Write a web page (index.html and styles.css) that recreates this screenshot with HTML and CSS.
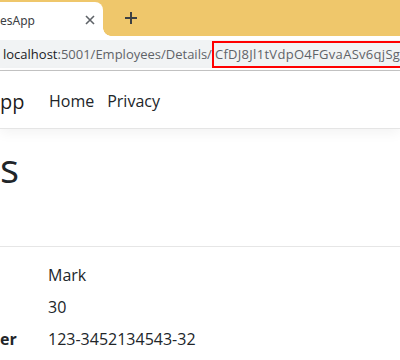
FILE: index.html
```html
<!DOCTYPE html>
<html lang="en">
<head>
    <meta charset="UTF-8">
    <title>EmployeesApp - Details</title>
    <link rel="stylesheet" href="styles.css">
</head>
<body>
    <!-- browser chrome -->
    <div class="tabstrip">
        <div class="tab">
            <span class="tab-title">esApp</span>
            <svg class="tab-close" width="10" height="10" viewBox="0 0 10 10">
                <path d="M1 1 L9 9 M9 1 L1 9" stroke="#5f6368" stroke-width="1.6" fill="none"/>
            </svg>
        </div>
        <div class="newtab">
            <svg width="12" height="12" viewBox="0 0 12 12">
                <path d="M6 0 V12 M0 6 H12" stroke="#3c4043" stroke-width="2" fill="none"/>
            </svg>
        </div>
    </div>

    <div class="toolbar">
        <div class="omnibox">
            <span class="host">localhost</span><span class="path">:5001/Employees/Details/</span><span class="token">CfDJ8Jl1tVdpO4FGvaASv6qjSg</span>
        </div>
    </div>

    <!-- page -->
    <div class="navbar">
        <span class="brand">pp</span>
        <a class="nav-link">Home</a>
        <a class="nav-link">Privacy</a>
    </div>

    <div class="content">
        <h1>s</h1>
        <hr>
        <dl class="details">
            <dt></dt><dd>Mark</dd>
            <dt></dt><dd>30</dd>
            <dt>er</dt><dd>123-3452134543-32</dd>
        </dl>
    </div>
</body>
</html>
```

FILE: styles.css
```css
body {
    margin: 0;
    width: 400px;
    height: 360px;
    overflow: hidden;
    background: #fff;
    font-family: 'Open Sans', 'Noto Sans', sans-serif;
    color: #212529;
}

/* tab strip */
.tabstrip {
    display: flex;
    align-items: flex-end;
    height: 36px;
    background: #efc76b;
}

.tab {
    position: relative;
    display: flex;
    align-items: center;
    width: 103px;
    height: 34px;
    background: #fff;
    border-top-right-radius: 8px;
}

.tab::after {
    content: '';
    position: absolute;
    right: -8px;
    bottom: 0;
    width: 8px;
    height: 8px;
    background: radial-gradient(circle at 100% 0, transparent 7.5px, #fff 8px);
}

.tab-title {
    font-family: 'Noto Sans', sans-serif;
    font-size: 12px;
    color: #3c4043;
    flex: 1;
    margin-top: 2px;
}

.tab-close {
    margin-right: 8px;
    margin-top: 2px;
}

.newtab {
    display: flex;
    align-items: center;
    height: 36px;
    margin-left: 22px;
}

/* address bar */
.toolbar {
    height: 35px;
    border-bottom: 1px solid #c4c4c4;
    padding-top: 4px;
    box-sizing: border-box;
}

.omnibox {
    display: flex;
    align-items: center;
    height: 28px;
    background: #f1f3f4;
    font-size: 13px;
    white-space: nowrap;
    padding-left: 3px;
    overflow: hidden;
}

.host {
    color: #202124;
}

.path {
    color: #5f6368;
}

.token {
    color: #5f6368;
    letter-spacing: 0.3px;
    border: 2px solid #f00;
    border-right: none;
    line-height: 23px;
    padding-left: 1px;
    margin-top: 1px;
}

/* site navbar */
.navbar {
    display: flex;
    align-items: center;
    height: 58px;
    padding-top: 3px;
    box-sizing: border-box;
    border-bottom: 1px solid #e5e5e5;
    box-shadow: 0 4px 12px rgba(0, 0, 0, 0.05);
}

.brand {
    font-size: 20px;
    color: rgba(0, 0, 0, 0.9);
    margin-right: 18px;
}

.nav-link {
    font-size: 16px;
    color: #212529;
    padding: 0 6.5px;
}

.content h1 {
    font-size: 40px;
    font-weight: 500;
    line-height: 1.2;
    margin: 15px 0 0;
}

.content hr {
    border: 0;
    border-top: 1px solid #e6e6e6;
    margin: 54px 0 16px;
}

.details {
    display: grid;
    grid-template-columns: 48px 1fr;
    row-gap: 8px;
    margin: 0;
    font-size: 16px;
    line-height: 24px;
}

.details dt {
    font-weight: 700;
}

.details dd {
    margin: 0;
}
```
